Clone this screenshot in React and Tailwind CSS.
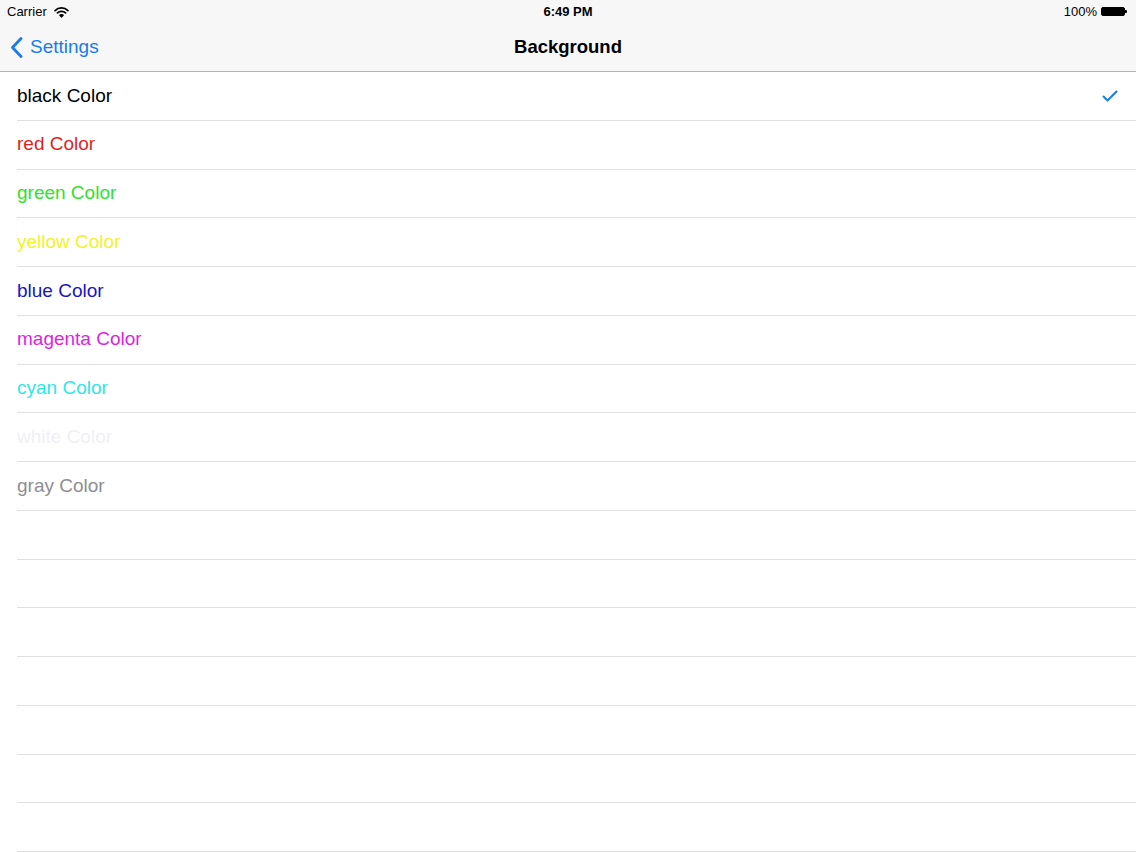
import React from 'react';

const COLORS = [
  { name: 'black Color', color: 'text-[#000000]', checked: true },
  { name: 'red Color', color: 'text-[#e01f1f]' },
  { name: 'green Color', color: 'text-[#2ee22e]' },
  { name: 'yellow Color', color: 'text-[#f2f22a]' },
  { name: 'blue Color', color: 'text-[#1616c4]' },
  { name: 'magenta Color', color: 'text-[#e01fe0]' },
  { name: 'cyan Color', color: 'text-[#2ee6e6]' },
  { name: 'white Color', color: 'text-[#f0eff4]' },
  { name: 'gray Color', color: 'text-[#8e8e93]' },
];

const EMPTY_ROWS = 7;

function Wifi() {
  return (
    <svg width="15" height="12" viewBox="0 0 14 11" className="ml-[7px]">
      <path d="M1 4.2a8.5 8.5 0 0 1 12 0" fill="none" stroke="#000" strokeWidth="1.6" strokeLinecap="round" />
      <path d="M3.2 6.4a5.4 5.4 0 0 1 7.6 0" fill="none" stroke="#000" strokeWidth="1.6" strokeLinecap="round" />
      <path d="M5.3 8.5a2.4 2.4 0 0 1 3.4 0L7 10.3z" fill="#000" stroke="#000" strokeWidth="1" strokeLinejoin="round" />
    </svg>
  );
}

function Battery() {
  return (
    <div className="ml-[4px] flex items-center">
      <div className="h-[9px] w-[24px] rounded-[2px] border border-black bg-black" />
      <div className="h-[3px] w-[2px] rounded-r-[1px] bg-black" />
    </div>
  );
}

function Check() {
  return (
    <svg width="16" height="12" viewBox="0 0 16 12">
      <path d="M1.5 6.5l4 4 9-9" fill="none" stroke="#1a7ce8" strokeWidth="2" strokeLinecap="round" strokeLinejoin="round" />
    </svg>
  );
}

export default function App() {
  return (
    <div className="h-[852px] w-[1136px] overflow-hidden bg-white font-['Liberation_Sans',Arial,sans-serif]">
      <div className="border-b border-[#b4b4b8] bg-[#f7f7f8]">
        <div className="relative flex h-[23px] items-center px-[7px] text-[13px] text-black">
          <div className="flex items-center">
            <span>Carrier</span>
            <Wifi />
          </div>
          <span className="absolute left-1/2 -translate-x-1/2 font-bold">6:49 PM</span>
          <div className="ml-auto flex items-center pr-[2px]">
            <span>100%</span>
            <Battery />
          </div>
        </div>
        <div className="relative flex h-[48px] items-center">
          <div className="flex items-center pl-[10px] text-[#1a7ce8]">
            <svg width="13" height="21" viewBox="0 0 13 21">
              <path d="M11 1.5L2.5 10.5l8.5 9" fill="none" stroke="#1a7ce8" strokeWidth="2.8" strokeLinecap="round" strokeLinejoin="round" />
            </svg>
            <span className="ml-[7px] text-[19px]">Settings</span>
          </div>
          <span className="absolute left-1/2 -translate-x-1/2 text-[18.5px] font-bold text-black">Background</span>
        </div>
      </div>
      <div className="pl-[17px]">
        {COLORS.map((item) => (
          <div key={item.name} className="flex h-[48.75px] items-center border-b border-[#e0e0e3] pr-[18px]">
            <span className={`text-[19px] ${item.color}`}>{item.name}</span>
            {item.checked && <span className="ml-auto flex"><Check /></span>}
          </div>
        ))}
        {Array.from({ length: EMPTY_ROWS }).map((_, i) => (
          <div key={i} className="h-[48.75px] border-b border-[#e0e0e3]" />
        ))}
      </div>
    </div>
  );
}
